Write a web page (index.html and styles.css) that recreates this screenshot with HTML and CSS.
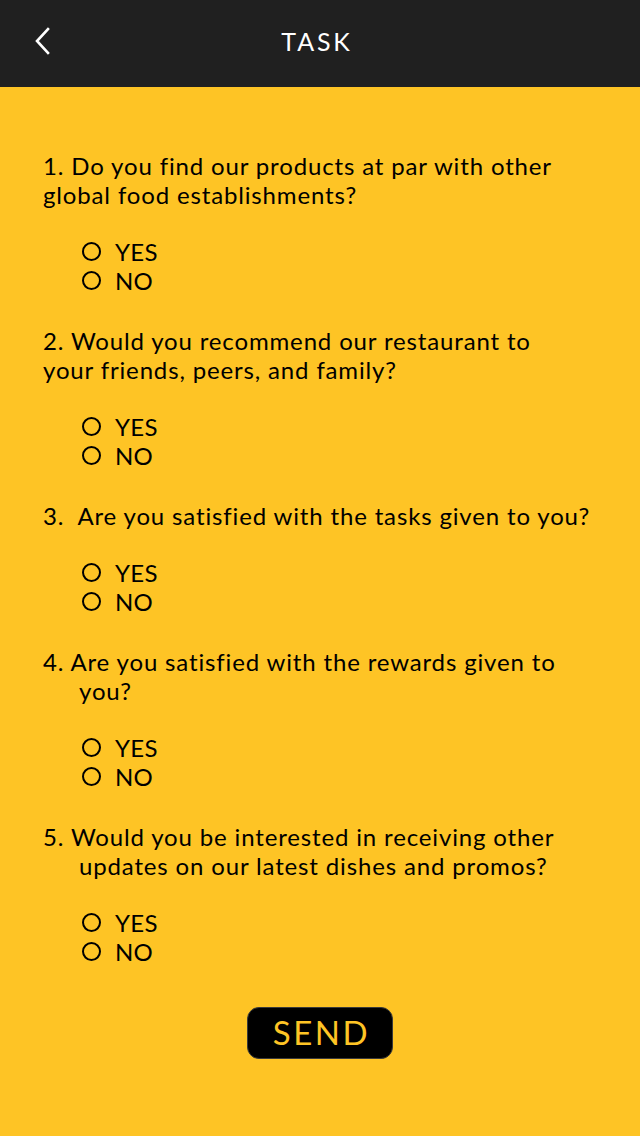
FILE: index.html
```html
<!DOCTYPE html>
<html lang="en">
<head>
<meta charset="utf-8">
<title>Task</title>
<link rel="stylesheet" href="styles.css">
</head>
<body>
<div class="screen">
  <header class="topbar">
    <a class="back" href="#" aria-label="Back">
      <svg width="16" height="28" viewBox="0 0 16 28"><path d="M14 2 L3 14 L14 26" fill="none" stroke="#fff" stroke-width="2.6" stroke-linecap="square" stroke-linejoin="miter"/></svg>
    </a>
    <h1 class="title">TASK</h1>
    <span class="spacer"></span>
  </header>

  <main class="survey">
    <section class="q">
      <p class="question">1. Do you find our products at par with other<br>global food establishments?</p>
      <ul class="options">
        <li class="option"><span class="radio"></span>YES</li>
        <li class="option"><span class="radio"></span>NO</li>
      </ul>
    </section>

    <section class="q">
      <p class="question">2. Would you recommend our restaurant to<br>your friends, peers, and family?</p>
      <ul class="options">
        <li class="option"><span class="radio"></span>YES</li>
        <li class="option"><span class="radio"></span>NO</li>
      </ul>
    </section>

    <section class="q">
      <p class="question">3.&nbsp; Are you satisfied with the tasks given to you?</p>
      <ul class="options">
        <li class="option"><span class="radio"></span>YES</li>
        <li class="option"><span class="radio"></span>NO</li>
      </ul>
    </section>

    <section class="q">
      <p class="question hang">4. Are you satisfied with the rewards given to<br>you?</p>
      <ul class="options">
        <li class="option"><span class="radio"></span>YES</li>
        <li class="option"><span class="radio"></span>NO</li>
      </ul>
    </section>

    <section class="q">
      <p class="question hang">5. Would you be interested in receiving other<br>updates on our latest dishes and promos?</p>
      <ul class="options">
        <li class="option"><span class="radio"></span>YES</li>
        <li class="option"><span class="radio"></span>NO</li>
      </ul>
    </section>

    <div class="actions">
      <button class="send" type="button">SEND</button>
    </div>
  </main>
</div>
</body>
</html>
```

FILE: styles.css
```css
* { box-sizing: border-box; }

html, body {
  margin: 0;
  padding: 0;
  height: 100%;
}

body {
  font-family: "Lato", "Liberation Sans", sans-serif;
  background: #fec425;
  color: #000;
}

.screen {
  display: flex;
  flex-direction: column;
  min-height: 1136px;
}

.topbar {
  height: 87px;
  background: #202020;
  display: grid;
  grid-template-columns: 1fr auto 1fr;
  align-items: center;
  padding-bottom: 6px;
}

.back {
  justify-self: start;
  margin-left: 34px;
  display: flex;
}

.title {
  margin: 0;
  color: #fff;
  font-weight: 400;
  font-size: 25px;
  letter-spacing: 2.8px;
  margin-left: -6px;
}

.survey {
  flex: 1;
  background: #fec425;
  padding: 64px 0 40px 43px;
}

.q {
  margin: 0 0 31px;
}

.question {
  margin: 0 0 28px;
  font-size: 24px;
  line-height: 29px;
  letter-spacing: 0.85px;
}

.question.hang {
  padding-left: 36px;
  text-indent: -36px;
}

.options {
  list-style: none;
  margin: 0;
  padding: 0 0 0 39px;
}

.option {
  display: flex;
  align-items: center;
  gap: 14px;
  font-size: 24px;
  line-height: 29px;
  letter-spacing: 0.3px;
}

.radio {
  width: 19px;
  height: 19px;
  border: 2px solid #000;
  border-radius: 50%;
  flex: none;
}

.actions {
  display: flex;
  justify-content: center;
  padding-right: 43px;
  margin-top: 41px;
}

.send {
  width: 146px;
  height: 52px;
  border: 1px solid #3a3a3a;
  border-radius: 12px;
  background: #000;
  color: #fec425;
  font-family: inherit;
  font-size: 33px;
  letter-spacing: 2.5px;
  padding: 0 0 2px 3px;
  cursor: pointer;
}
```
